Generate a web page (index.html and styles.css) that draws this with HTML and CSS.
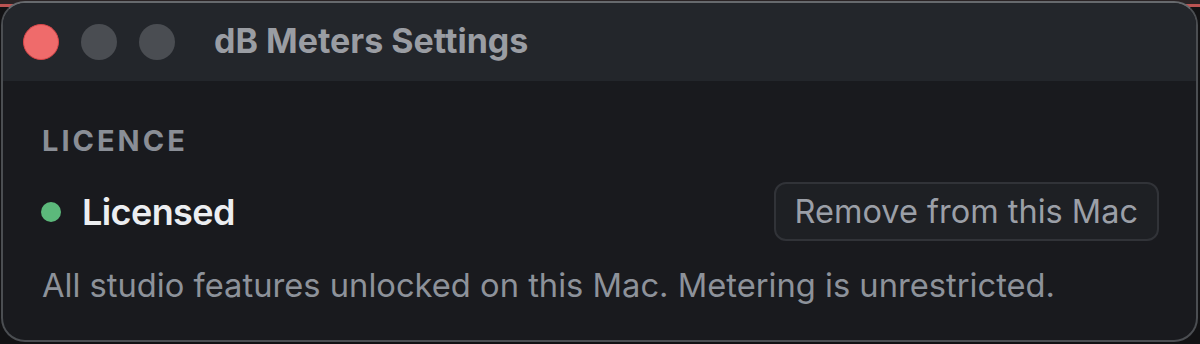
FILE: index.html
```html
<!DOCTYPE html>
<html>
<head>
<meta charset="utf-8">
<link rel="stylesheet" href="styles.css">
</head>
<body>
<div class="window">
  <div class="titlebar">
    <div class="lights">
      <span class="light close"></span>
      <span class="light"></span>
      <span class="light"></span>
    </div>
    <div class="title">dB Meters Settings</div>
  </div>
  <div class="content">
    <div class="section-label">LICENCE</div>
    <div class="status-row">
      <div class="status">
        <span class="dot"></span>
        <span class="status-text">Licensed</span>
      </div>
      <button class="btn">Remove from this Mac</button>
    </div>
    <p class="desc">All studio features unlocked on this Mac. Metering is unrestricted.</p>
  </div>
</div>
</body>
</html>
```

FILE: styles.css
```css
html, body {
  margin: 0;
  padding: 0;
}
body {
  width: 1200px;
  height: 344px;
  overflow: hidden;
  background: linear-gradient(to bottom, #2a2325 0, #2a2325 4px, #bb5352 4px, #bb5352 7px, #121214 7px);
  font-family: Inter, "Noto Sans", sans-serif;
}
.window {
  box-sizing: border-box;
  margin: 1px 0 0 1px;
  width: 1197px;
  height: 341px;
  border: 2px solid #4b4e52;
  border-top-color: #66696d;
  border-radius: 24px;
  overflow: hidden;
  background: #191a1e;
  display: flex;
  flex-direction: column;
}
.titlebar {
  height: 78px;
  flex: none;
  background: #23262b;
  display: flex;
  align-items: center;
  padding-left: 20px;
}
.lights {
  display: flex;
  gap: 22px;
}
.light {
  width: 36px;
  height: 36px;
  border-radius: 50%;
  background: #4a4d52;
  box-sizing: border-box;
}
.light.close {
  background: #ef6b6b;
  border: 1.5px solid #d9474a;
}
.title {
  margin-left: 39px;
  margin-top: -3px;
  font-size: 34px;
  font-weight: 700;
  color: #9a9da3;
}
.content {
  padding: 42px 37px 0 39px;
}
.section-label {
  font-size: 29px;
  line-height: 36px;
  font-weight: 700;
  letter-spacing: 3px;
  color: #8a8e96;
}
.status-row {
  margin-top: 23px;
  display: flex;
  align-items: center;
  justify-content: space-between;
}
.status {
  display: flex;
  align-items: center;
}
.dot {
  width: 20px;
  height: 20px;
  border-radius: 50%;
  background: #5cb97b;
  margin-left: -1px;
  margin-right: 21px;
}
.status-text {
  font-size: 36px;
  font-weight: 600;
  letter-spacing: -0.6px;
  color: #eceef1;
}
.btn {
  box-sizing: border-box;
  height: 59px;
  padding: 0 19px;
  border: 2px solid #313338;
  border-radius: 12px;
  background: #1e2024;
  color: #9b9fa7;
  font-family: Inter, "Noto Sans", sans-serif;
  font-size: 32.5px;
  font-weight: 400;
}
.desc {
  margin: 25px 0 0;
  font-size: 32.7px;
  line-height: 38px;
  color: #8d929a;
}
```
